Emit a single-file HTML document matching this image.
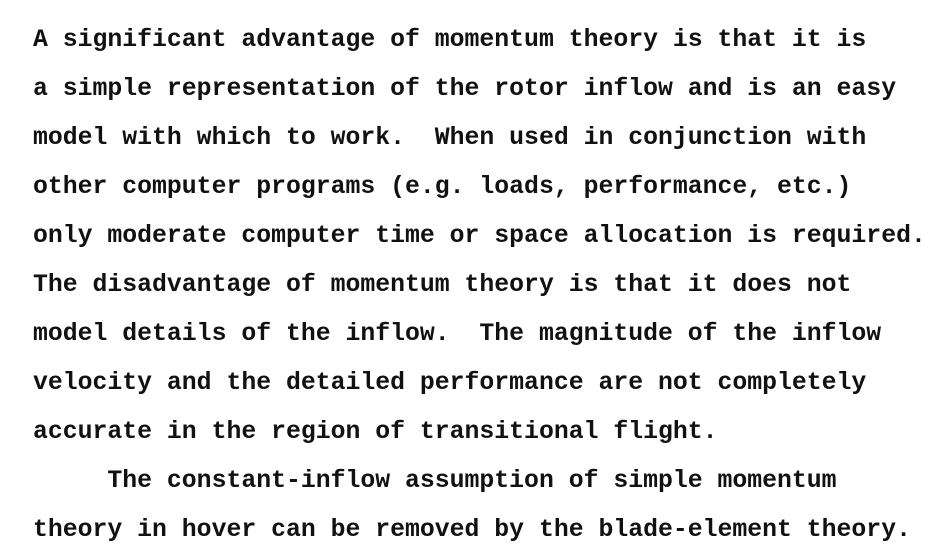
<!DOCTYPE html>
<html><head><meta charset="utf-8"><style>
html,body{margin:0;padding:0;background:#fff;}
body{width:937px;height:558px;overflow:hidden;position:relative;}
pre{position:absolute;left:33px;top:16px;margin:0;font-family:"Liberation Mono",monospace;font-size:24.8px;line-height:49px;color:#111;font-weight:bold;letter-spacing:0;}
</style></head><body>
<pre>A significant advantage of momentum theory is that it is
a simple representation of the rotor inflow and is an easy
model with which to work.  When used in conjunction with
other computer programs (e.g. loads, performance, etc.)
only moderate computer time or space allocation is required.
The disadvantage of momentum theory is that it does not
model details of the inflow.  The magnitude of the inflow
velocity and the detailed performance are not completely
accurate in the region of transitional flight.
     The constant-inflow assumption of simple momentum
theory in hover can be removed by the blade-element theory.</pre>
</body></html>
